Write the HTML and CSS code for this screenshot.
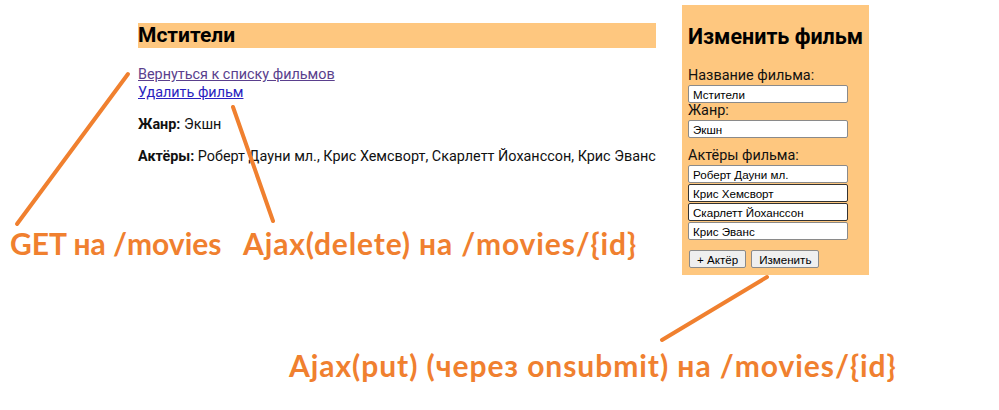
FILE: index.html
```html
<!DOCTYPE html>
<html lang="ru">
<head>
<meta charset="utf-8">
<title>Мстители</title>
<link rel="stylesheet" href="styles.css">
</head>
<body>
<div class="page">
  <main class="movie">
    <h1 class="movie-title">Мстители</h1>
    <div class="links">
      <a class="link visited" href="#">Вернуться к списку фильмов</a>
      <a class="link" href="#">Удалить фильм</a>
    </div>
    <p class="info"><b>Жанр:</b> Экшн</p>
    <p class="info"><b>Актёры:</b> Роберт Дауни мл., Крис Хемсворт, Скарлетт Йоханссон, Крис Эванс</p>
  </main>
  <form class="edit">
    <h2 class="edit-title">Изменить фильм</h2>
    <label class="lbl lbl-first">Название фильма:</label>
    <input class="field" value="Мстители">
    <label class="lbl">Жанр:</label>
    <input class="field" value="Экшн">
    <label class="lbl lbl-gap">Актёры фильма:</label>
    <div class="actors">
      <input class="field actor" value="Роберт Дауни мл.">
      <input class="field actor dark" value="Крис Хемсворт">
      <input class="field actor dark" value="Скарлетт Йоханссон">
      <input class="field actor" value="Крис Эванс">
    </div>
    <div class="buttons">
      <button type="button" class="btn">+ Актёр</button>
      <button type="button" class="btn">Изменить</button>
    </div>
  </form>
</div>
<svg class="arrows" width="999" height="410" viewBox="0 0 999 410">
  <line x1="128" y1="74" x2="17" y2="224"/>
  <line x1="233" y1="107" x2="273" y2="221"/>
  <line x1="767" y1="277" x2="662" y2="340"/>
</svg>
<div class="note note-get">GET на /movies</div>
<div class="note note-delete">Ajax(delete) на /movies/{id}</div>
<div class="note note-put">Ajax(put) (через onsubmit) на /movies/{id}</div>
</body>
</html>
```

FILE: styles.css
```css
html, body {
  margin: 0;
  padding: 0;
  background: #fff;
}
body {
  width: 999px;
  height: 410px;
  position: relative;
  overflow: hidden;
  font-family: Roboto, "Liberation Sans", sans-serif;
  color: #111;
}
.page {
  display: flex;
  align-items: flex-start;
  padding: 5px 0 0 138px;
  gap: 26px;
}
.movie {
  width: 518px;
  padding-top: 18px;
}
.movie-title {
  margin: 0;
  background: #fec77f;
  font-size: 21px;
  line-height: 25px;
  font-weight: 700;
  color: #000;
}
.links {
  display: flex;
  flex-direction: column;
  margin-top: 18px;
  font-size: 14.4px;
  line-height: 18px;
}
.link {
  color: #2a1fc0;
  align-self: flex-start;
}
.link.visited {
  color: #5a3f8d;
}
.info {
  margin: 14px 0 0;
  font-size: 14.4px;
  line-height: 18px;
  white-space: nowrap;
}
.edit {
  width: 187px;
  height: 270px;
  box-sizing: border-box;
  background: #fec77f;
  padding: 0 6px;
  display: flex;
  flex-direction: column;
  align-items: flex-start;
}
.edit-title {
  margin: 20px 0 0;
  font-size: 21.5px;
  line-height: 24px;
  font-weight: 700;
  color: #000;
  white-space: nowrap;
}
.lbl {
  font-size: 14.4px;
  line-height: 16px;
  margin-top: 0;
  margin-bottom: 1px;
}
.lbl-first {
  margin-top: 19px;
}
.lbl-gap {
  margin-top: 10px;
}
.field {
  box-sizing: border-box;
  width: 160px;
  height: 18px;
  margin: 0;
  padding: 0 4px;
  border: 1px solid #8a8a8a;
  border-radius: 2px;
  background: #fff;
  font-family: "Liberation Sans", Arial, sans-serif;
  font-size: 11.6px;
  color: #000;
}
.actors {
  display: flex;
  flex-direction: column;
  gap: 1px;
}
.actor.dark {
  border-color: #333;
}
.buttons {
  display: flex;
  gap: 5px;
  margin-top: 10px;
  margin-left: 1px;
}
.btn {
  height: 18px;
  padding: 0 7px;
  border: 1px solid #8a8a8a;
  border-radius: 2px;
  background: #efefef;
  font-family: "Liberation Sans", Arial, sans-serif;
  font-size: 11.6px;
  color: #000;
}
.arrows {
  position: absolute;
  left: 0;
  top: 0;
  pointer-events: none;
}
.arrows line {
  stroke: #f0802f;
  stroke-width: 4;
  stroke-linecap: round;
}
.note {
  position: absolute;
  font-family: Lato, "Open Sans", sans-serif;
  font-weight: 700;
  font-size: 30px;
  line-height: 36px;
  color: #f0802f;
  white-space: nowrap;
}
.note-get {
  left: 10px;
  top: 225px;
}
.note-delete {
  left: 243px;
  top: 225px;
  letter-spacing: 0.85px;
}
.note-put {
  left: 289px;
  top: 347px;
  letter-spacing: 0.95px;
}
```
